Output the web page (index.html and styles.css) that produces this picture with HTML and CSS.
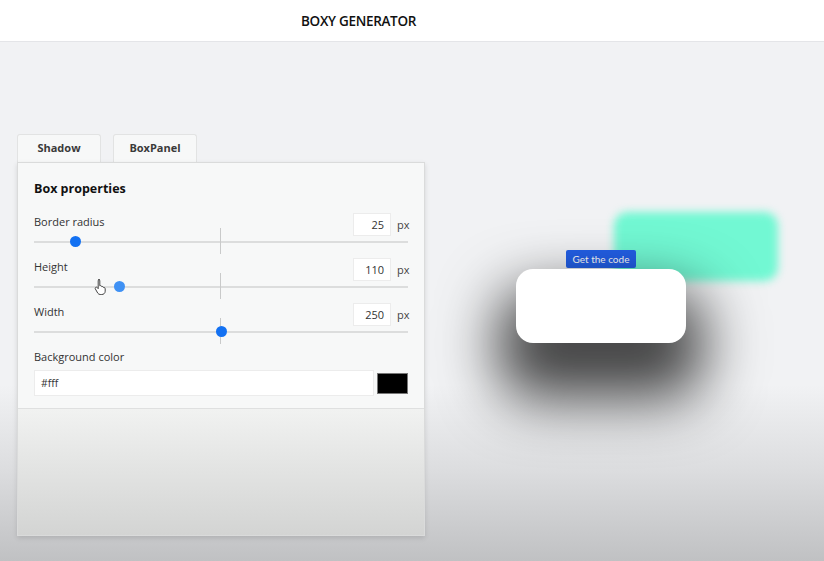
FILE: index.html
```html
<!DOCTYPE html>
<html lang="en">
<head>
<meta charset="utf-8">
<title>Boxy Generator</title>
<link rel="stylesheet" href="styles.css">
</head>
<body>
<header class="topbar"><h1 class="title">BOXY GENERATOR</h1></header>
<main class="main">
  <section class="editor">
    <nav class="tabs">
      <div class="tab">Shadow</div>
      <div class="tab">BoxPanel</div>
    </nav>
    <div class="panel">
      <div class="panel-body">
        <h2 class="section-title">Box properties</h2>
        <div class="field">
          <div class="field-head">
            <span class="label">Border radius</span>
            <span class="num-wrap"><span class="num">25</span><span class="unit">px</span></span>
          </div>
          <div class="slider"><span class="tick"></span><span class="thumb" style="left:41px"></span></div>
        </div>
        <div class="field">
          <div class="field-head">
            <span class="label">Height</span>
            <span class="num-wrap"><span class="num">110</span><span class="unit">px</span></span>
          </div>
          <div class="slider"><span class="tick"></span><span class="thumb thumb-hover" style="left:85px"></span>
            <svg class="cursor" width="14" height="17" viewBox="0 0 14 17"><path d="M4.5 1.5c.8 0 1.3.6 1.3 1.3v5l.6-.2c.7 0 1.2.4 1.3 1l.5-.1c.7 0 1.2.4 1.3 1l.4-.1c.7 0 1.3.6 1.3 1.3v2.5c0 2-1.5 3.3-3.5 3.3H6.2c-1 0-1.8-.5-2.4-1.3L1.4 11c-.4-.6-.2-1.4.4-1.7.5-.3 1.1-.1 1.5.3l.9 1.1V2.8c0-.7.5-1.3 1.3-1.3z" fill="#fff" stroke="#444" stroke-width="1"/></svg>
          </div>
        </div>
        <div class="field">
          <div class="field-head">
            <span class="label">Width</span>
            <span class="num-wrap"><span class="num">250</span><span class="unit">px</span></span>
          </div>
          <div class="slider"><span class="tick"></span><span class="thumb" style="left:187px"></span></div>
        </div>
        <div class="field field-color">
          <span class="label">Background color</span>
          <div class="color-row">
            <span class="color-text">#fff</span>
            <span class="swatch"></span>
          </div>
        </div>
      </div>
      <div class="panel-foot"></div>
    </div>
  </section>
  <section class="preview">
    <div class="glow"></div>
    <button class="code-btn">Get the code</button>
    <div class="box"></div>
  </section>
</main>
</body>
</html>
```
FILE: styles.css
```css
* { box-sizing: border-box; }
html, body { margin: 0; height: 100%; }
body {
  font-family: "Open Sans", "Noto Sans", sans-serif;
  color: #222;
  background: linear-gradient(to bottom, #f1f2f4 0, #f1f2f4 385px, #dcdddf 470px, #c0c1c3 561px);
  overflow: hidden;
}
.topbar {
  height: 42px;
  background: #fff;
  border-bottom: 1px solid #e4e5e8;
  display: flex;
  align-items: center;
  padding-left: 301px;
}
.title {
  margin: 0;
  font-size: 13.5px;
  font-weight: 600;
  letter-spacing: -0.3px;
  color: #111;
}
.main {
  display: flex;
  padding: 92px 0 0 17px;
}
.editor { width: 408px; display: flex; flex-direction: column; }
.tabs { display: flex; gap: 12px; height: 28px; }
.tab {
  width: 84px;
  height: 28px;
  background: #f7f8f8;
  border: 1px solid #e2e3e3;
  border-bottom: none;
  border-radius: 3px 3px 0 0;
  font-size: 11px;
  font-weight: 700;
  color: #3a3a3a;
  display: flex;
  align-items: center;
  justify-content: center;
  padding-bottom: 2px;
}
.panel {
  border: 1px solid #dadbdb;
  box-shadow: 0 2px 5px rgba(0,0,0,0.12);
  height: 374px;
  display: flex;
  flex-direction: column;
}
.panel-body {
  background: #f7f8f8;
  padding: 16px 16px 10px 16px;
  border-bottom: 1px solid #dfe0e0;
  height: 246px;
}
.section-title {
  margin: 0 0 15px 0;
  font-size: 12.5px;
  font-weight: 700;
  color: #111;
  line-height: 20px;
}
.field { height: 45px; }
.field-head {
  display: flex;
  justify-content: space-between;
  align-items: flex-start;
  height: 26px;
}
.label {
  font-size: 11px;
  color: #333;
  line-height: 16px;
}
.num-wrap { display: flex; align-items: center; gap: 6px; margin-top: -1px; }
.num {
  width: 38px;
  height: 23px;
  background: #fff;
  border: 1px solid #ececec;
  font-size: 11px;
  color: #333;
  display: flex;
  align-items: center;
  justify-content: flex-end;
  padding-right: 6px;
}
.unit { font-size: 11px; color: #444; width: 11px; }
.slider {
  position: relative;
  height: 2px;
  background: #dcdddd;
  margin-top: 1px;
}
.tick {
  position: absolute;
  left: 186px;
  top: -13px;
  width: 1px;
  height: 26px;
  background: #c9caca;
}
.thumb {
  position: absolute;
  top: -5px;
  width: 11px;
  height: 11px;
  margin-left: -5px;
  border-radius: 50%;
  background: #1371f2;
}
.thumb-hover { background: #3f91f4; }
.cursor { position: absolute; left: 60px; top: -8px; }
.field-color { height: auto; }
.field-color .label { display: block; margin-bottom: 5px; }
.color-row {
  display: flex;
  align-items: center;
  gap: 3px;
}
.color-text {
  flex: 0 0 340px;
  height: 26px;
  background: #fff;
  border: 1px solid #ececec;
  font-size: 10.5px;
  color: #333;
  display: flex;
  align-items: center;
  padding-left: 6px;
}
.swatch {
  width: 31px;
  height: 21px;
  background: #000;
  border: 1px solid #777;
}
.panel-foot {
  flex: 1;
  background: linear-gradient(to bottom, #f1f2f1, #d3d4d3);
}
.preview {
  position: relative;
  display: flex;
  flex-direction: column;
  align-items: center;
  flex: 0 0 170px;
  margin-left: 91px;
  padding-top: 116px;
}
.glow {
  position: absolute;
  left: 98px;
  top: 78px;
  width: 164px;
  height: 69px;
  border-radius: 14px;
  background: #72f8d3;
  filter: blur(4px);
}
.code-btn {
  position: relative;
  font-family: "Lato", "Open Sans", sans-serif;
  font-size: 10px;
  color: #fff;
  background: #2360e8;
  border: none;
  border-radius: 2px;
  height: 18px;
  width: 70px;
  padding: 0;
  margin-bottom: 1px;
}
.box {
  position: relative;
  width: 170px;
  height: 74px;
  background: #fff;
  border-radius: 17px;
  box-shadow: 0 38px 58px 18px rgba(0,0,0,0.72);
}
```
